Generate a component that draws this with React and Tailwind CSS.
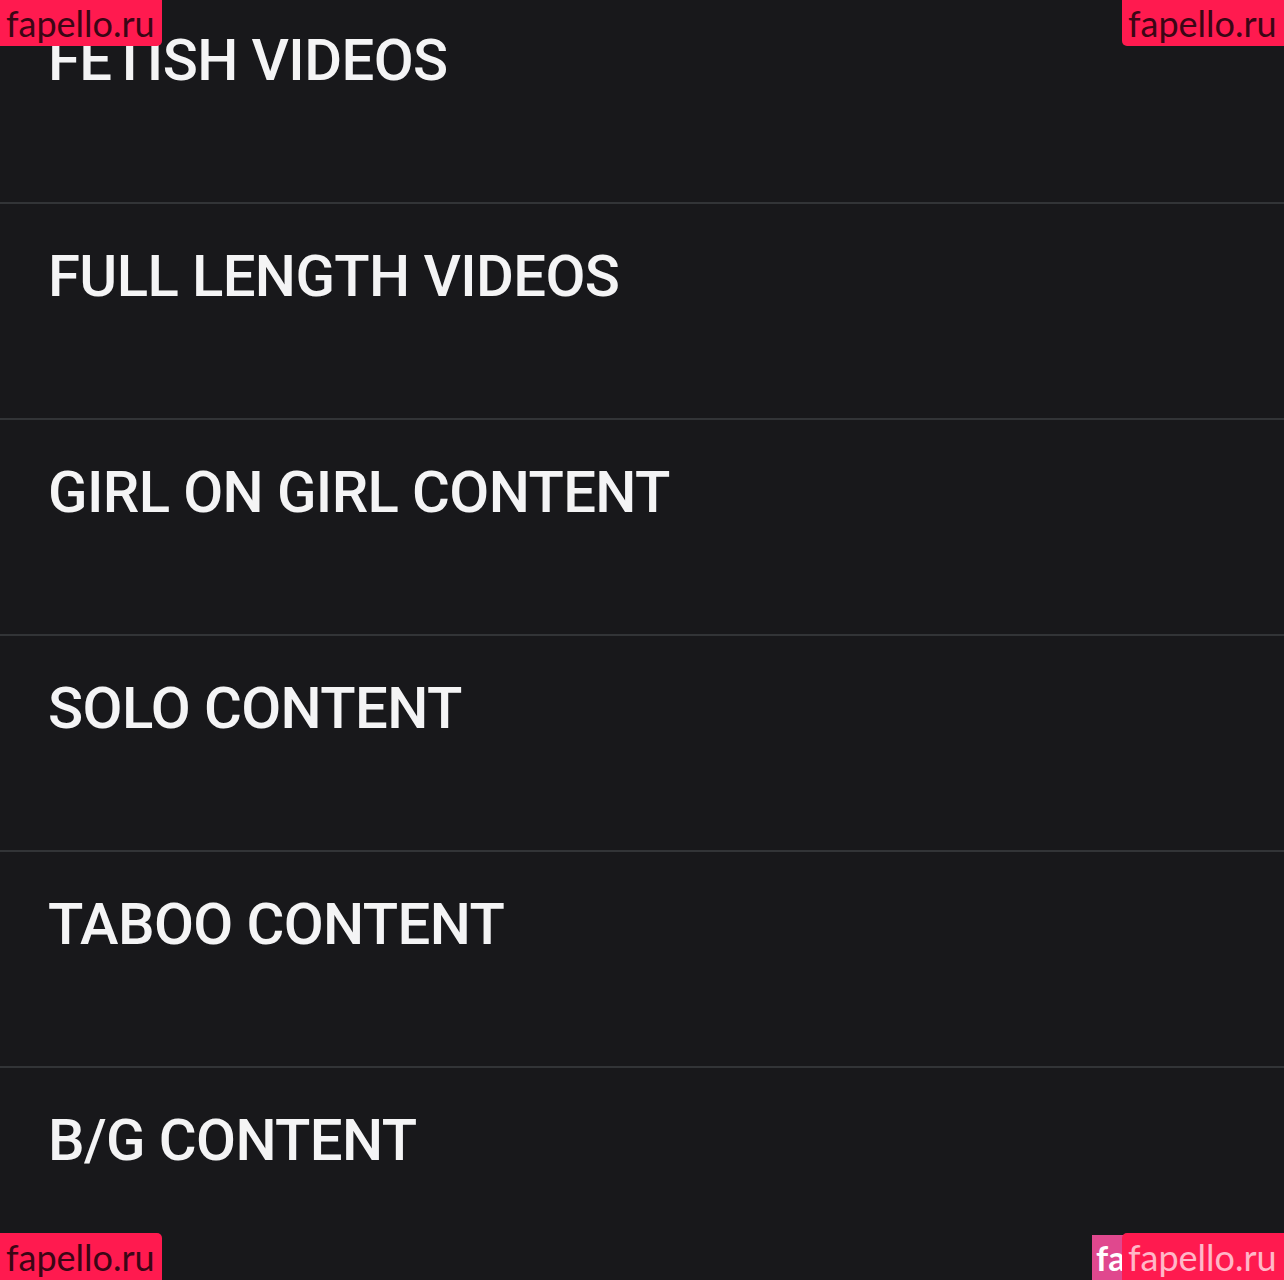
import React from 'react'

const items = [
  'FETISH VIDEOS',
  'FULL LENGTH VIDEOS',
  'GIRL ON GIRL CONTENT',
  'SOLO CONTENT',
  'TABOO CONTENT',
  'B/G CONTENT',
]

function Mark({ className = '', text = 'text-[#3b0615]' }) {
  return (
    <div
      className={`absolute h-[46px] w-[162px] bg-[#ff1a4f] flex items-center pl-[6px] text-[36px] leading-none ${text} ${className}`}
      style={{ fontFamily: 'Lato, "Noto Sans", sans-serif' }}
    >
      fapello.ru
    </div>
  )
}

export default function App() {
  return (
    <div className="relative w-[1284px] h-[1280px] overflow-hidden bg-[#18181b]" style={{ fontFamily: 'Roboto, "Liberation Sans", sans-serif' }}>
      <div className="-mt-[14px] flex flex-col">
        {items.map((t) => (
          <div key={t} className="h-[216px] border-t-2 border-[#323437] pt-[36px] pl-[48px]">
            <div className="text-[58px] leading-[72px] font-medium text-[#f4f4f5] tracking-[-0.6px]">{t}</div>
          </div>
        ))}
      </div>

      {/* watermarks */}
      <Mark className="top-0 left-0 rounded-br-[5px]" />
      <Mark className="top-0 right-0 rounded-bl-[5px]" />
      <Mark className="bottom-0 left-0 rounded-tr-[5px] h-[47px]" />
      <div
        className="absolute bottom-0 left-[1092px] h-[45px] w-[40px] bg-[#e0488e] flex items-center pl-[4px] text-[34px] leading-none text-white font-bold"
        style={{ fontFamily: 'Lato, "Noto Sans", sans-serif' }}
      >
        fa
      </div>
      <Mark className="bottom-0 right-0 left-auto rounded-tl-[5px] h-[47px] w-[161px]" text="text-[#ffffffb0]" />
    </div>
  )
}
